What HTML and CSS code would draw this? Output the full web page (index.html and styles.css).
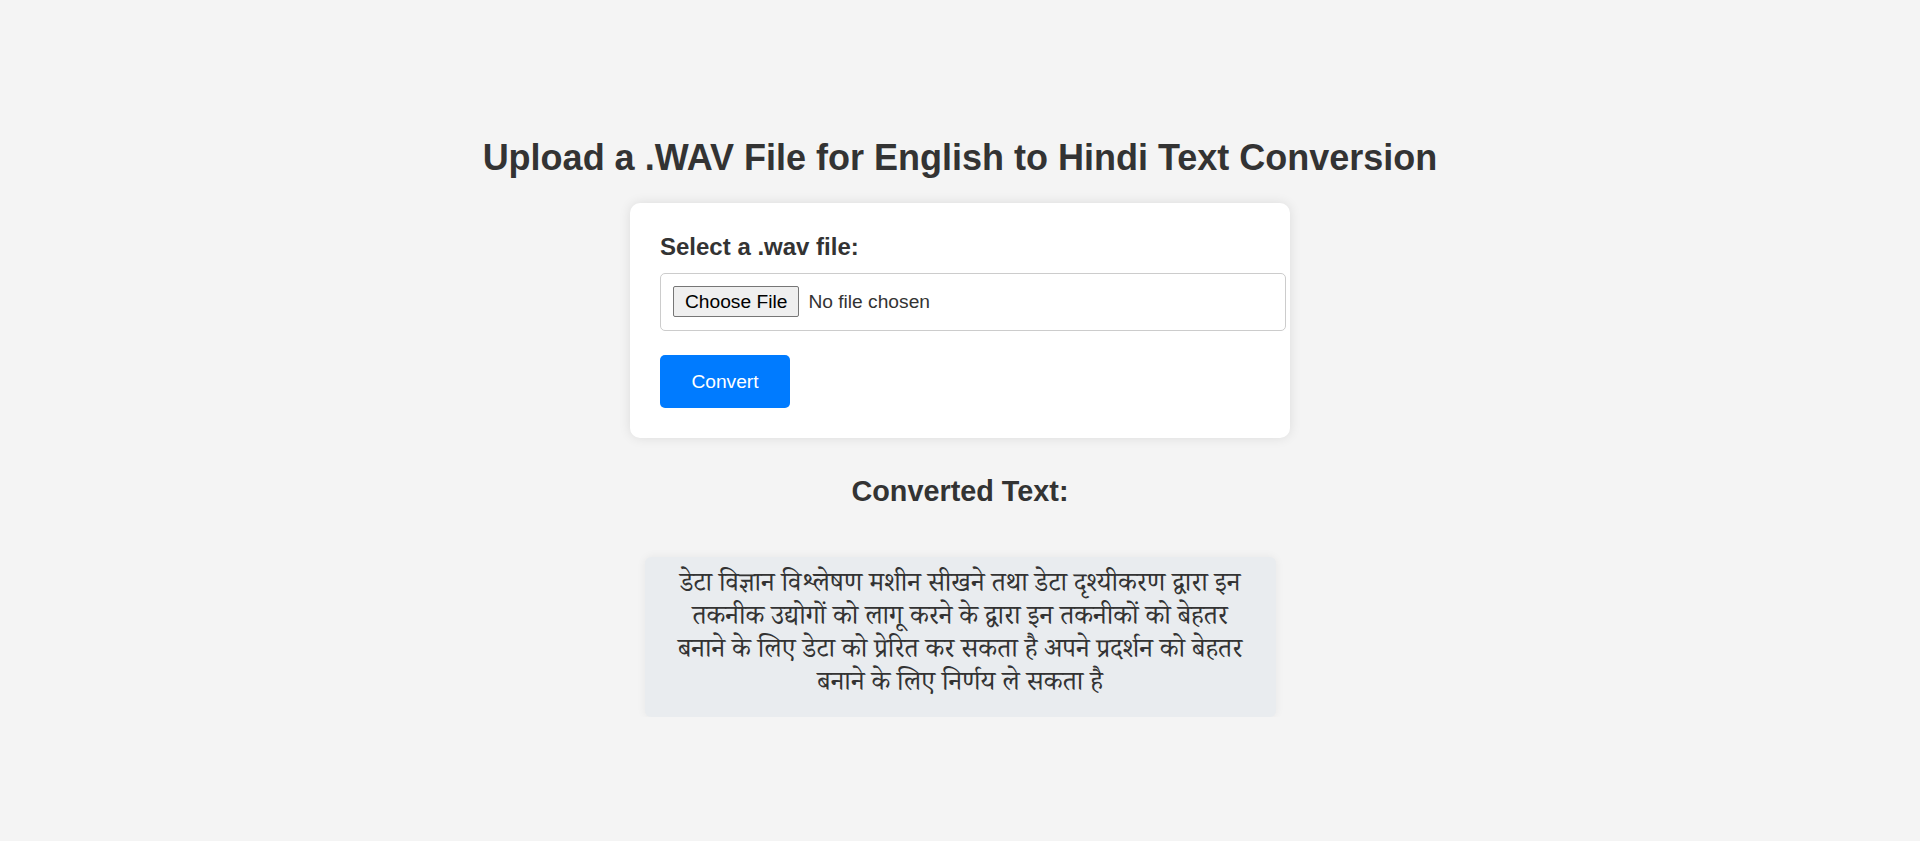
FILE: index.html
```html
<!DOCTYPE html>
<html lang="en">
<head>
<meta charset="utf-8">
<title>English to Hindi Text Conversion</title>
<link rel="stylesheet" href="styles.css">
</head>
<body>
<main class="page">
  <h1 class="title">Upload a .WAV File for English to Hindi Text Conversion</h1>
  <form class="card">
    <label class="field-label" for="file">Select a .wav file:</label>
    <input class="file-input" type="file" id="file" accept=".wav">
    <button class="convert-btn" type="button">Convert</button>
  </form>
  <h2 class="result-title">Converted Text:</h2>
  <div class="result-box" lang="hi">डेटा विज्ञान विश्लेषण मशीन सीखने तथा डेटा दृश्यीकरण द्वारा इन<br>तकनीक उद्योगों को लागू करने के द्वारा इन तकनीकों को बेहतर<br>बनाने के लिए डेटा को प्रेरित कर सकता है अपने प्रदर्शन को बेहतर<br>बनाने के लिए निर्णय ले सकता है</div>
</main>
</body>
</html>
```
FILE: styles.css
```css
html, body {
  margin: 0;
  padding: 0;
}
body {
  background: #f4f4f4;
  color: #333;
  font-family: "Liberation Sans", Arial, sans-serif;
}
.page {
  display: flex;
  flex-direction: column;
  align-items: center;
  padding-top: 137px;
}
.title {
  margin: 0 0 25px;
  font-size: 36px;
  line-height: 41px;
  font-weight: bold;
  text-align: center;
}
.card {
  box-sizing: border-box;
  width: 660px;
  margin: 0;
  padding: 30px;
  background: #fff;
  border-radius: 10px;
  box-shadow: 0 0 12px rgba(0, 0, 0, 0.1);
}
.field-label {
  display: block;
  margin-bottom: 12px;
  font-size: 24px;
  line-height: 28px;
  font-weight: bold;
}
.file-input {
  display: block;
  box-sizing: content-box;
  width: 100%;
  height: 32px;
  margin: 0;
  padding: 12px;
  border: 1px solid #ccc;
  border-radius: 5px;
  font-family: "Liberation Sans", Arial, sans-serif;
  font-size: 19.2px;
  color: #333;
  background: #fff;
}
.file-input::file-selector-button {
  box-sizing: border-box;
  height: 31px;
  margin: 0 9px 0 0;
  padding: 0 11px;
  border: 1px solid #767676;
  border-radius: 2px;
  background: #efefef;
  color: #000;
  font-family: "Liberation Sans", Arial, sans-serif;
  font-size: 19.2px;
}
.convert-btn {
  display: block;
  width: 130px;
  height: 53px;
  margin-top: 24px;
  padding: 0;
  border: none;
  border-radius: 5px;
  background: #007bff;
  color: #fff;
  font-family: "Liberation Sans", Arial, sans-serif;
  font-size: 19.2px;
  cursor: pointer;
}
.result-title {
  margin: 37px 0 49px;
  font-size: 28.8px;
  line-height: 33px;
  font-weight: bold;
  text-align: center;
}
.result-box {
  box-sizing: border-box;
  width: 631px;
  padding: 14px 10px;
  background: #e9ecef;
  border-radius: 6px;
  box-shadow: 0 0 10px rgba(0, 0, 0, 0.06);
  text-align: center;
  font-family: "Noto Serif Devanagari", "Noto Sans Devanagari", "Lohit Devanagari", "FreeSerif", serif;
  font-size: 26.5px;
  line-height: 33px;
  color: #333;
}
```
